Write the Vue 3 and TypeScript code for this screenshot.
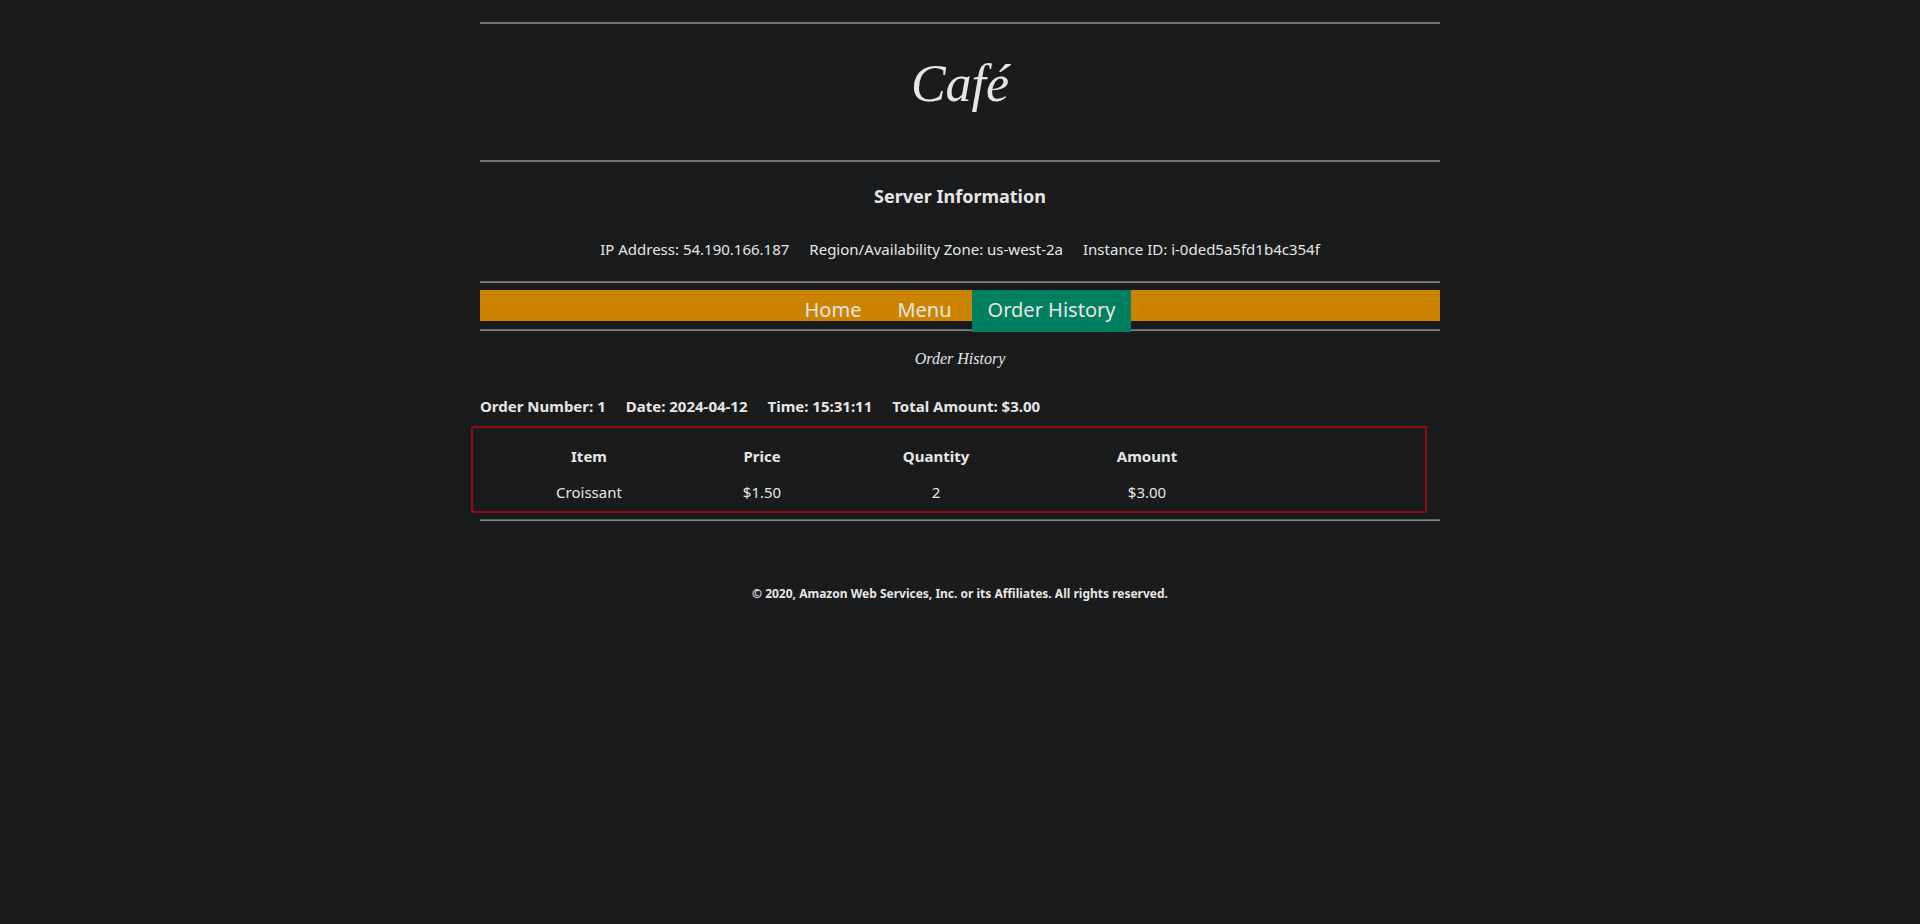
<script setup lang="ts">
interface OrderLine {
  item: string
  price: string
  quantity: number
  amount: string
}

const server: string[] = [
  'IP Address: 54.190.166.187',
  'Region/Availability Zone: us-west-2a',
  'Instance ID: i-0ded5a5fd1b4c354f',
]

const links = [
  { label: 'Home', active: false },
  { label: 'Menu', active: false },
  { label: 'Order History', active: true },
]

const summary: string[] = [
  'Order Number: 1',
  'Date: 2024-04-12',
  'Time: 15:31:11',
  'Total Amount: $3.00',
]

const lines: OrderLine[] = [
  { item: 'Croissant', price: '$1.50', quantity: 2, amount: '$3.00' },
]
</script>

<template>
  <div class="page">
    <header class="brand">
      <h1>Café</h1>
    </header>

    <section class="server">
      <h2>Server Information</h2>
      <p class="facts">
        <span v-for="fact in server" :key="fact">{{ fact }}</span>
      </p>
    </section>

    <hr />
    <nav class="bar">
      <a
        v-for="link in links"
        :key="link.label"
        href="#"
        :class="{ active: link.active }"
        :aria-current="link.active ? 'page' : undefined"
      >{{ link.label }}</a>
    </nav>
    <hr />

    <main>
      <h2 class="title">Order History</h2>
      <h3 class="facts summary">
        <span v-for="part in summary" :key="part">{{ part }}</span>
      </h3>
      <div class="order">
        <table>
          <colgroup>
            <col class="c-item" />
            <col class="c-price" />
            <col class="c-quantity" />
            <col class="c-amount" />
          </colgroup>
          <thead>
            <tr>
              <th scope="col">Item</th>
              <th scope="col">Price</th>
              <th scope="col">Quantity</th>
              <th scope="col">Amount</th>
            </tr>
          </thead>
          <tbody>
            <tr v-for="line in lines" :key="line.item">
              <td>{{ line.item }}</td>
              <td>{{ line.price }}</td>
              <td>{{ line.quantity }}</td>
              <td>{{ line.amount }}</td>
            </tr>
          </tbody>
        </table>
      </div>
    </main>
    <hr />

    <footer>© 2020, Amazon Web Services, Inc. or its Affiliates. All rights reserved.</footer>
  </div>
</template>

<style>
body {
  margin: 0;
  background: #1a1b1c;
}
</style>

<style scoped>
.page {
  width: 50%;
  margin: 0 auto;
  padding-top: 22px;
  color: #e8e6e3;
  font: 15px/20px 'Noto Sans', sans-serif;
}

h1,
h2,
h3,
p {
  margin: 0;
}

hr {
  height: 0;
  margin: 0;
  border: 0;
  border-top: 1px solid #606162;
  border-bottom: 1px solid #858585;
}

.brand {
  padding: 28px 0 44px;
  border-top: 2px solid #737373;
  border-bottom: 2px solid #737373;
  text-align: center;
}

.brand h1 {
  font: italic 400 52px/64px 'Liberation Serif', serif;
}

.server {
  padding: 22px 0;
  text-align: center;
}

.server h2 {
  font-size: 18px;
  line-height: 24px;
}

.facts {
  display: flex;
  flex-wrap: wrap;
  gap: 0 20px;
}

.server .facts {
  justify-content: center;
  margin-top: 31px;
}

.bar {
  display: flex;
  justify-content: center;
  gap: 4px;
  height: 31px;
  margin: 7px 0 8px;
  background: #cc8400;
}

.bar a {
  position: relative;
  height: 26px;
  padding: 7px 16px 9px;
  color: #e8e6e3;
  font-size: 20px;
  line-height: 26px;
  text-decoration: none;
}

.bar .active {
  background: #008060;
}

.title {
  margin-top: 18px;
  font: italic 400 16px/20px 'Liberation Serif', serif;
  text-align: center;
}

.summary {
  margin-top: 27px;
  font-size: 15px;
  line-height: 20px;
}

.order {
  position: relative;
  margin-top: 22px;
  padding-bottom: 9px;
}

.order::after {
  content: '';
  position: absolute;
  top: -12px;
  right: 13px;
  bottom: 6px;
  left: -9px;
  border: 2px solid #8b0f12;
  border-radius: 1px;
  pointer-events: none;
}

table {
  width: 80%;
  border-collapse: collapse;
  table-layout: fixed;
}

.c-item {
  width: 218px;
}

.c-price {
  width: 128px;
}

.c-quantity {
  width: 220px;
}

.c-amount {
  width: 202px;
}

th,
td {
  padding: 8px;
  text-align: center;
}

footer {
  margin-top: 64px;
  font-size: 12px;
  font-weight: 700;
  line-height: 18px;
  text-align: center;
}
</style>
